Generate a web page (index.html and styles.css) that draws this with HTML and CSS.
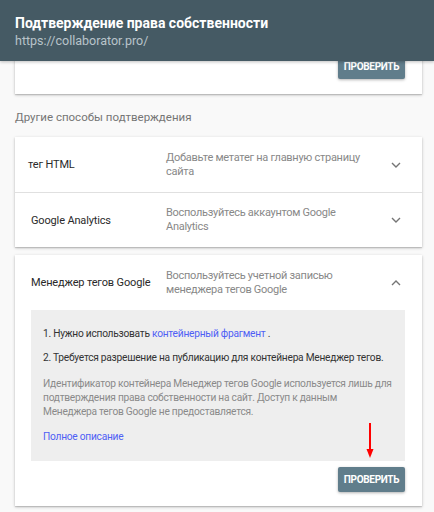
FILE: index.html
```html
<!DOCTYPE html>
<html lang="ru">
<head>
<meta charset="utf-8">
<title>Подтверждение права собственности</title>
<link rel="stylesheet" href="styles.css">
</head>
<body>
<header class="topbar">
  <h1 class="topbar-title">Подтверждение права собственности</h1>
  <div class="topbar-url">https://collaborator.pro/</div>
</header>
<main class="content">
  <section class="card card-first">
    <div class="actions">
      <button class="btn">ПРОВЕРИТЬ</button>
    </div>
  </section>

  <div class="section-label">Другие способы подтверждения</div>

  <section class="card">
    <div class="method-row">
      <div class="method-name method-name-html">тег HTML</div>
      <div class="method-desc">Добавьте метатег на главную страницу сайта</div>
      <svg class="chevron" width="10" height="6" viewBox="0 0 10 6"><polyline points="1,1 5,5 9,1" fill="none" stroke="#757575" stroke-width="1.4"/></svg>
    </div>
    <div class="method-row">
      <div class="method-name">Google Analytics</div>
      <div class="method-desc">Воспользуйтесь аккаунтом Google Analytics</div>
      <svg class="chevron" width="10" height="6" viewBox="0 0 10 6"><polyline points="1,1 5,5 9,1" fill="none" stroke="#757575" stroke-width="1.4"/></svg>
    </div>
  </section>

  <section class="card card-open">
    <div class="method-row method-row-open">
      <div class="method-name">Менеджер тегов Google</div>
      <div class="method-desc">Воспользуйтесь учетной записью менеджера тегов Google</div>
      <svg class="chevron" width="10" height="6" viewBox="0 0 10 6"><polyline points="1,5 5,1 9,5" fill="none" stroke="#757575" stroke-width="1.4"/></svg>
    </div>
    <div class="panel">
      <p class="step">1. Нужно использовать <a class="link" href="#">контейнерный фрагмент</a> .</p>
      <p class="step step-2">2. Требуется разрешение на публикацию для контейнера Менеджер тегов.</p>
      <p class="note">Идентификатор контейнера Менеджер тегов Google используется лишь для подтверждения права собственности на сайт. Доступ к данным Менеджера тегов Google не предоставляется.</p>
      <a class="link full-link" href="#">Полное описание</a>
    </div>
    <div class="actions actions-open">
      <button class="btn">ПРОВЕРИТЬ</button>
    </div>
    <svg class="red-arrow" width="8" height="36" viewBox="0 0 8 36"><line x1="4" y1="0" x2="4" y2="28" stroke="#ff0000" stroke-width="2"/><polygon points="0.5,26 7.5,26 4,35" fill="#ff0000"/></svg>
  </section>
</main>
</body>
</html>
```

FILE: styles.css
```css
* { box-sizing: border-box; }

body {
  margin: 0;
  background: #f9f9f9;
  font-family: Roboto, "Noto Sans", Arial, sans-serif;
  color: #212121;
  width: 434px;
  height: 512px;
  overflow: hidden;
}

.topbar {
  position: relative;
  z-index: 2;
  height: 61px;
  background: #455a64;
  padding: 14px 15px 0 15px;
  box-shadow: 0 1px 3px rgba(0,0,0,0.25);
}

.topbar-title {
  margin: 0;
  font-size: 14px;
  font-weight: 700;
  line-height: 19px;
  color: #ffffff;
}

.topbar-url {
  font-size: 12.5px;
  line-height: 15px;
  color: #b9c4ca;
}

.content {
  padding: 0 12px 0 15px;
}

.card {
  background: #ffffff;
  box-shadow: 0 1px 3px rgba(0,0,0,0.22), 0 1px 1px rgba(0,0,0,0.12);
  position: relative;
}

.card-first {
  margin-top: -20px;
  padding-top: 13px;
  padding-bottom: 15px;
}

.actions {
  display: flex;
  justify-content: flex-end;
  padding-right: 17px;
}

.btn {
  width: 67px;
  height: 25px;
  border: none;
  border-radius: 2px;
  background: #607d8b;
  color: #ffffff;
  font-family: Roboto, "Noto Sans", Arial, sans-serif;
  font-size: 10px;
  font-weight: 700;
  letter-spacing: -0.3px;
  padding: 0;
  box-shadow: 0 1px 3px rgba(0,0,0,0.3);
}

.section-label {
  font-size: 11.5px;
  line-height: 14px;
  color: #757575;
  margin: 16px 0 13px;
}

.method-row {
  display: grid;
  grid-template-columns: 135px 210px 1fr;
  align-items: center;
  height: 55px;
  padding: 0 21px 0 16px;
}

.method-row + .method-row {
  border-top: 1px solid #e0e0e0;
}

.method-name {
  font-size: 11px;
  letter-spacing: -0.15px;
  color: #2a2a2a;
}

.method-name-html {
  margin-left: -3px;
}

.method-desc {
  font-size: 11px;
  letter-spacing: -0.28px;
  line-height: 14px;
  color: #888888;
}

.chevron {
  justify-self: end;
}

.card + .card { margin-top: 8px; }

.card-open {
  padding-bottom: 14px;
}

.panel {
  margin: 0 17px 0 16px;
  background: #eeeeee;
  padding: 17px 12px 17px 12px;
  font-size: 10.2px;
  letter-spacing: -0.25px;
  line-height: 14px;
}

.panel p { margin: 0; }

.step { color: #333333; }
.panel .step-2 { margin-top: 10px; }

.panel .note {
  margin-top: 12px;
  color: #8a8a8a;
}

.link {
  color: #4f5ff5;
  text-decoration: none;
}

.full-link {
  display: block;
  margin-top: 11px;
}

.actions-open {
  margin-top: 6px;
}

.red-arrow {
  position: absolute;
  left: 351px;
  top: 168px;
}
```
